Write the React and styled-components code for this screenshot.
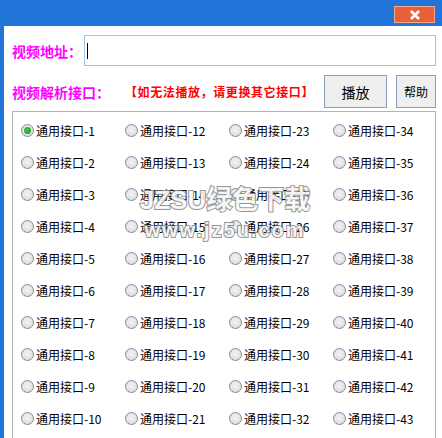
import React from "react";
import styled, { createGlobalStyle } from "styled-components";

const GlobalStyle = createGlobalStyle`
  html, body { margin: 0; padding: 0; background: #fff; }
  body { font-family: "Noto Sans CJK SC", "Noto Sans", sans-serif; }
`;

const Window = styled.div`
  position: relative;
  width: 442px;
  height: 438px;
  overflow: hidden;
  box-sizing: border-box;
  border-left: 4px solid #2175d9;
  background: #fff;
  display: flex;
  flex-direction: column;
`;

const TitleBar = styled.div`
  height: 26px;
  flex: none;
  background: #2175d9;
  display: flex;
  justify-content: flex-end;
  align-items: flex-start;
  padding: 6px 7px 0 0;
  box-sizing: border-box;
  margin-left: -4px;
`;

const CloseButton = styled.div`
  width: 41px;
  height: 17px;
  box-sizing: border-box;
  background: #e8613c;
  border: 1px solid #f0a88f;
  display: flex;
  align-items: center;
  justify-content: center;
`;

const Body = styled.div`
  flex: 1;
  padding: 9px 0 0 8px;
  display: flex;
  flex-direction: column;
`;

const Row = styled.div`
  display: flex;
  align-items: center;
  height: ${(p) => p.h}px;
  margin-bottom: ${(p) => p.mb || 0}px;
`;

const Label = styled.span`
  color: #ff00ff;
  font-weight: bold;
  font-size: 14px;
  width: ${(p) => p.w}px;
  flex: none;
`;

const Input = styled.div`
  width: 352px;
  height: 31px;
  box-sizing: border-box;
  border: 1px solid #a6c3e8;
  display: flex;
  align-items: center;
  padding-left: 2px;
`;

const Caret = styled.div`
  width: 1px;
  height: 16px;
  background: #000;
`;

const Notice = styled.span`
  color: #ff0000;
  font-weight: bold;
  font-size: 12px;
  letter-spacing: 0.6px;
  width: 199px;
  margin-left: -3px;
  flex: none;
`;

const Button = styled.div`
  width: ${(p) => p.w}px;
  height: 33px;
  box-sizing: border-box;
  border: 1px solid #8aa0bb;
  background: #efefef;
  display: flex;
  align-items: center;
  justify-content: center;
  font-size: ${(p) => p.fs}px;
  color: #000;
  margin-right: ${(p) => p.mr || 0}px;
  flex: none;
`;

const GroupBox = styled.div`
  width: 424px;
  flex: 1;
  box-sizing: border-box;
  border: 1px solid #b4b4b4;
  border-bottom: none;
  padding: 2px 0 0 8px;
  display: grid;
  grid-template-columns: repeat(4, 104px);
  grid-template-rows: repeat(10, 32.1px);
  grid-auto-flow: column;
`;

const RadioItem = styled.label`
  display: flex;
  align-items: center;
  font-size: 12px;
  color: #000;
  white-space: nowrap;
`;

const Circle = styled.span`
  width: 13px;
  height: 13px;
  box-sizing: border-box;
  border-radius: 50%;
  border: 1px solid #7d8ea6;
  background: radial-gradient(circle at 50% 45%, #f4f4f4 0%, #e2e2e2 60%, #d0d0d0 100%);
  margin-right: 2px;
  display: flex;
  align-items: center;
  justify-content: center;
  flex: none;
`;

const Dot = styled.span`
  width: 7px;
  height: 7px;
  border-radius: 50%;
  background: radial-gradient(circle at 40% 40%, #4ec24e, #1a8f1a);
`;

const Watermark = styled.div`
  position: absolute;
  left: 134px;
  top: 180px;
  width: 174px;
  display: flex;
  flex-direction: column;
  align-items: center;
  pointer-events: none;
  font-family: "Liberation Sans", "Noto Sans CJK SC", sans-serif;
  font-weight: bold;
  color: rgba(255, 255, 255, 0.9);
  -webkit-text-stroke: 2px rgba(125, 125, 125, 0.8);
  paint-order: stroke fill;
`;

const MarkBig = styled.span`
  font-size: 26px;
  line-height: 40px;
`;

const MarkSmall = styled.span`
  font-size: 20px;
  line-height: 20px;
  letter-spacing: 2px;
`;

const items = [];
for (let c = 0; c < 4; c++) {
  for (let r = 0; r < 10; r++) {
    items.push(c * 11 + r + 1);
  }
}

export default function App() {
  return (
    <>
      <GlobalStyle />
      <Window>
        <TitleBar>
          <CloseButton>
            <svg width="12" height="12" viewBox="0 0 12 12">
              <path d="M2 2 L10 10 M10 2 L2 10" stroke="#fff" strokeWidth="2.6" />
            </svg>
          </CloseButton>
        </TitleBar>
        <Body>
          <Row h={31} mb={9}>
            <Label w={72}>视频地址：</Label>
            <Input>
              <Caret />
            </Input>
          </Row>
          <Row h={33} mb={3}>
            <Label w={116}>视频解析接口：</Label>
            <Notice>【如无法播放，请更换其它接口】</Notice>
            <Button w={63} fs={14} mr={9}>播放</Button>
            <Button w={40} fs={12}>帮助</Button>
          </Row>
          <GroupBox>
            {items.map((n) => (
              <RadioItem key={n}>
                <Circle>{n === 1 && <Dot />}</Circle>
                通用接口-{n}
              </RadioItem>
            ))}
          </GroupBox>
        </Body>
        <Watermark>
          <MarkBig>JZSU绿色下载</MarkBig>
          <MarkSmall>www.jz5u.com</MarkSmall>
        </Watermark>
      </Window>
    </>
  );
}
